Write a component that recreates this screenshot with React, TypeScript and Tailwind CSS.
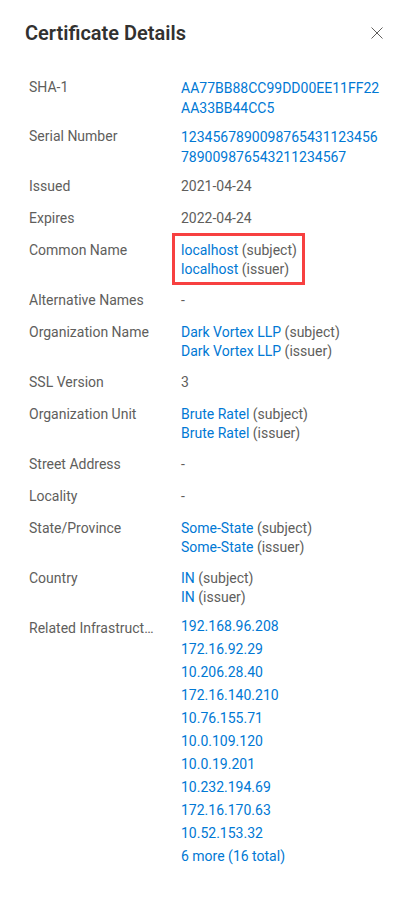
import { ReactNode } from 'react';

type Pair = { value: string; role: string };

const font = { fontFamily: 'Roboto, "Noto Sans", sans-serif' };

const relatedIps = [
  '192.168.96.208',
  '172.16.92.29',
  '10.206.28.40',
  '172.16.140.210',
  '10.76.155.71',
  '10.0.109.120',
  '10.0.19.201',
  '10.232.194.69',
  '172.16.170.63',
  '10.52.153.32',
];

function Row({ label, children }: { label: string; children: ReactNode }) {
  return (
    <div className="grid grid-cols-[152px_1fr] leading-[18px]">
      <div className="truncate pr-[21px] text-[#605e5c]">{label}</div>
      <div className="min-w-0 text-[#605e5c]">{children}</div>
    </div>
  );
}

function Pairs({ items }: { items: Pair[] }) {
  return (
    <div className="-mb-[2px] flex flex-col leading-[19px]">
      {items.map((p) => (
        <div key={p.role}>
          <a className="text-[#0078d4]">{p.value}</a> <span className="text-[#605e5c]">({p.role})</span>
        </div>
      ))}
    </div>
  );
}

const both = (v: string): Pair[] => [
  { value: v, role: 'subject' },
  { value: v, role: 'issuer' },
];

export default function App() {
  return (
    <div className="min-h-screen w-full bg-white text-[14px] antialiased" style={font}>
      {/* Header */}
      <div className="flex items-center justify-between pl-[25px] pr-[24px] pt-[19px]">
        <h1 className="text-[20px] font-semibold leading-7 text-[#323130]">Certificate Details</h1>
        <button className="flex h-6 w-6 items-center justify-center text-[#605e5c]">
          <svg width="12" height="12" viewBox="0 0 12 12" fill="none" stroke="currentColor" strokeWidth="1">
            <path d="M0.5 0.5L11.5 11.5M11.5 0.5L0.5 11.5" />
          </svg>
        </button>
      </div>

      {/* Details */}
      <div className="mt-[31px] flex flex-col gap-[14px] pl-[29px] pr-[30px]">
        <Row label="SHA-1">
          <a className="-mb-[5px] block break-all leading-5 text-[#0078d4]">AA77BB88CC99DD00EE11FF22AA33BB44CC5</a>
        </Row>
        <Row label="Serial Number">
          <a className="-mb-[4px] block break-all leading-5 text-[#0078d4]">1234567890098765431123456789009876543211234567</a>
        </Row>
        <Row label="Issued">2021-04-24</Row>
        <Row label="Expires">2022-04-24</Row>
        <Row label="Common Name">
          <div className="relative inline-block">
            <Pairs items={both('localhost')} />
            <div className="pointer-events-none absolute -bottom-[8px] -left-[9px] -right-[8px] -top-[8px] border-[3px] border-[#f74040]" />
          </div>
        </Row>
        <Row label="Alternative Names">-</Row>
        <Row label="Organization Name">
          <Pairs items={both('Dark Vortex LLP')} />
        </Row>
        <Row label="SSL Version">3</Row>
        <Row label="Organization Unit">
          <Pairs items={both('Brute Ratel')} />
        </Row>
        <Row label="Street Address">-</Row>
        <Row label="Locality">-</Row>
        <Row label="State/Province">
          <Pairs items={both('Some-State')} />
        </Row>
        <Row label="Country">
          <Pairs items={both('IN')} />
        </Row>
        <Row label="Related Infrastructure">
          <div className="-mt-[2px] flex flex-col gap-[5px] text-[#0078d4]">
            {relatedIps.map((ip) => (
              <a key={ip}>{ip}</a>
            ))}
            <a>6 more (16 total)</a>
          </div>
        </Row>
      </div>
    </div>
  );
}
